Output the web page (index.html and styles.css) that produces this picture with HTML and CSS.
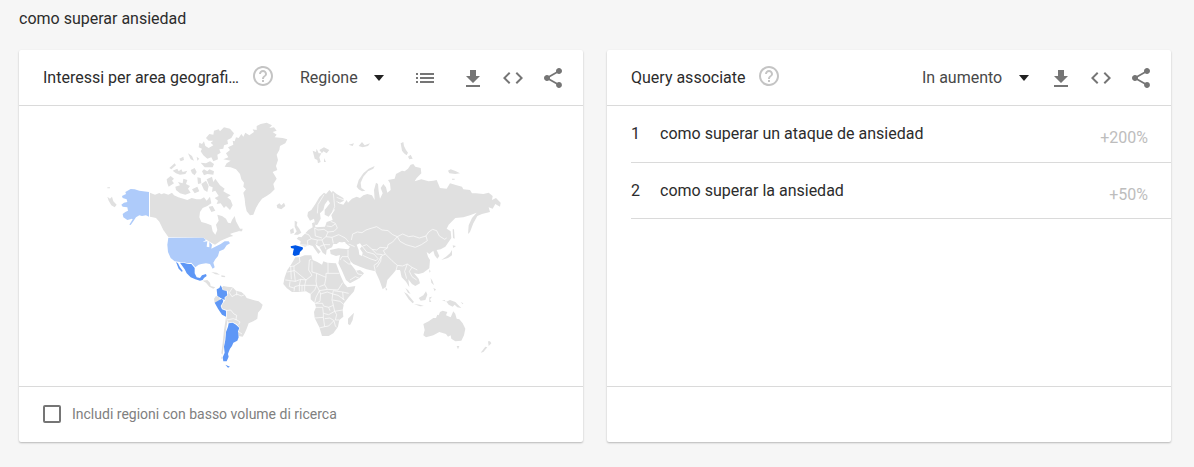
FILE: index.html
```html
<!DOCTYPE html>
<html lang="it">
<head>
<meta charset="utf-8">
<meta name="viewport" content="width=device-width, initial-scale=1">
<title>como superar ansiedad</title>
<link rel="stylesheet" href="styles.css">
</head>
<body>
<svg class="sprite" aria-hidden="true">
  <symbol id="help" viewBox="0 0 24 24"><path d="M11 18h2v-2h-2v2zm1-16C6.480 2 2 6.480 2 12s4.480 10 10 10 10-4.480 10-10S17.520 2 12 2zm0 18c-4.410 0-8-3.590-8-8s3.590-8 8-8 8 3.590 8 8-3.590 8-8 8zm0-14c-2.210 0-4 1.790-4 4h2c0-1.100.9-2 2-2s2 .9 2 2c0 2-3 1.750-3 5h2c0-2.250 3-2.500 3-5 0-2.210-1.790-4-4-4z"/></symbol>
  <symbol id="list" viewBox="0 0 24 24"><path d="M3 7h2v2H3zM3 11h2v2H3zM3 15h2v2H3zM7 7h14v2H7zM7 11h14v2H7zM7 15h14v2H7z"/></symbol>
  <symbol id="download" viewBox="0 0 24 24"><path d="M19 10h-4V4H9v6H5l7 7 7-7zM5 19v2h14v-2H5z"/></symbol>
  <symbol id="code" viewBox="0 0 24 24"><path d="M9.400 16.600L4.800 12l4.600-4.600L8 6l-6 6 6 6 1.400-1.400zm5.200 0l4.600-4.600-4.600-4.600L16 6l6 6-6 6-1.400-1.400z"/></symbol>
  <symbol id="share" viewBox="0 0 24 24"><path d="M18 16.080c-.76 0-1.440.3-1.960.77L8.910 12.700c.05-.23.09-.46.09-.7s-.04-.47-.09-.7l7.050-4.110c.54.5 1.250.81 2.040.81 1.660 0 3-1.340 3-3s-1.340-3-3-3-3 1.340-3 3c0 .24.04.47.09.7L8.040 9.810C7.500 9.310 6.790 9 6 9c-1.660 0-3 1.340-3 3s1.340 3 3 3c.79 0 1.500-.31 2.040-.81l7.120 4.160c-.05.21-.08.43-.08.65 0 1.610 1.310 2.920 2.920 2.920s2.920-1.310 2.920-2.920-1.310-2.920-2.920-2.920z"/></symbol>
  <symbol id="caret" viewBox="0 0 10 6"><path d="M0 0h10L5 6z"/></symbol>
</svg>

<main class="page">
  <h1 class="term">como superar ansiedad</h1>
  <div class="cards">
    <section class="card">
      <header class="card-head">
        <h2 class="title" title="Interessi per area geografica">Interessi per area geografi…</h2>
        <button class="icon help" type="button" aria-label="Guida"><svg><use href="#help"/></svg></button>
        <label class="picker picker-near">
          <select aria-label="Risoluzione"><option>Regione</option></select>
          <svg class="caret"><use href="#caret"/></svg>
        </label>
        <div class="tools">
          <button class="icon icon-list" type="button" aria-label="Elenco"><svg><use href="#list"/></svg></button>
          <button class="icon" type="button" aria-label="Scarica"><svg><use href="#download"/></svg></button>
          <button class="icon" type="button" aria-label="Incorpora"><svg><use href="#code"/></svg></button>
          <button class="icon" type="button" aria-label="Condividi"><svg><use href="#share"/></svg></button>
        </div>
      </header>
      <div class="map-area">
        <svg class="map" viewBox="100 118 402 256" role="img" aria-label="Mappa del mondo">
          <!-- North America and Greenland -->
          <g class="land" transform="translate(100 110) scale(.33333)">
            <path class="low" d="M66 258L78 252 76 246 92 237 104 238 118 242 147 246V320L138 316 126 318 118 316 108 322 100 334 92 345 88 344 98 328 96 326 82 330 70 322 68 312 76 306 84 302 82 292 68 290 64 284 72 278 82 276 80 268 68 264Z"/>
            <path d="M150 248L165 254 178 249 184 253 192 250 205 254 216 248 222 256 235 262 250 266 262 270 275 264 290 268 302 268 312 262 320 272 330 260 334 280 322 288 308 294 300 306 298 322 304 336 318 340 334 346 338 364 346 374 352 360 348 344 356 332 352 314 366 318 378 326 384 338 392 340 396 330 404 318 408 334 420 356 416 364 400 368 390 372 400 378 390 380 362 392 345 404 330 396 310 383 205 381 190 360 178 335 168 324 158 322 150 320Z"/>
            <path d="M370 148L385 142 378 130 390 120 384 112 400 104 398 92 404 94 408 82 416 84 424 72 430 80 436 68 448 76 462 66 458 58 470 60 470 48 482 42 500 38 516 46 508 54 522 52 530 62 518 66 530 74 524 82 548 84 562 88 556 100 540 108 538 120 530 134 534 150 528 168 532 180 518 186 524 196 530 206 520 222 524 238 512 250 500 258 486 266 476 280 468 294 460 314 450 316 440 304 436 286 434 266 430 248 438 238 430 230 432 218 424 208 420 192 408 178 392 172 374 170 380 160 392 152Z"/>
            <path d="M318 84L328 72 340 74 342 62 356 58 360 64 372 52 390 56 402 70 394 84 382 90 384 102 372 106 370 116 358 118 362 128 352 134 354 148 340 154 334 142 322 146 310 136 302 124 306 116 296 112 298 98 306 102 312 94 316 108 326 114 340 106 332 98 340 92 326 92Z"/>
            <path d="M320 208L336 200 340 216 346 206 360 226 374 236 370 244 380 250 392 256 382 262 392 270 398 286 390 300 378 288 372 294 362 280 350 282 354 272 344 264 356 258 346 242 336 246 338 232 328 228Z"/>
            <path d="M226 230L240 226 234 216 248 220 250 206 262 210 258 222 270 228 264 236 272 248 256 254 240 250 228 240ZM200 208L212 198 222 206 216 212 222 220 206 230 202 220ZM218 182L232 176 236 184 244 178 248 186 262 182 256 192 240 194 228 190ZM306 184L312 178 322 184 328 178 342 184 340 194 322 192 312 196ZM272 180L284 174 290 186 284 196 276 190ZM238 146L250 140 252 150 242 154ZM264 130L276 138 282 152 272 148ZM292 202L302 204 304 220 294 222ZM276 238L292 230 298 244 284 250ZM304 222L318 212 326 228 322 246 312 240ZM208 174L224 160 228 166 214 178ZM302 158L318 160 330 154 342 162 338 172 314 172ZM326 290L338 288 346 302 334 306ZM290 140L298 146 292 152Z"/>
            <path d="M22 260L30 266 36 260 40 274 50 284 44 292 34 286 26 272ZM530 286L538 280 544 286 552 278 556 288 544 298 532 294ZM416 356L428 356 426 364 418 364ZM22 232h8v3h-8Z"/>
          </g>
          <!-- United States, Mexico and South America -->
          <g class="land" transform="translate(100 220) scale(.33333)">
            <path class="low" d="M205 53H310L318 60 308 66 322 64 320 80 328 82 328 66 336 74 334 86 350 78 362 72 374 64 386 64 390 70 380 76 372 88 358 94 354 108 346 118 340 128 344 142 338 146 330 132 318 130 304 132 296 134 286 142 274 128 264 130 248 126 240 126 224 124 212 114 204 96 202 74Z"/>
            <path class="mid" d="M240 128H250L264 132 274 132 284 144 284 160 290 172 300 174 306 166 318 162 320 168 312 174 308 180 300 182 286 178 272 172 260 160 254 148ZM228 126L234 130 240 142 248 152 246 156 236 146Z"/>
            <path d="M308 182L322 180 330 188 332 198 346 202 340 206 328 200 318 188ZM334 156L350 158 360 164 346 163ZM364 166L376 168 374 172 364 170Z"/>
            <path class="mid" d="M350 208L358 204 362 196 366 204 368 210 380 212 382 226 374 232 374 240 362 234 352 228Z"/>
            <path d="M342 236L348 228 358 232 360 240 350 250 344 248Z"/>
            <path class="mid" d="M344 248L358 240 366 236 370 242 368 248 362 258 366 268 378 272V290L366 284 354 266Z"/>
            <path d="M366 202L370 198 382 200 398 202 408 212 424 216 434 224 440 234 460 240 476 244 488 254 484 266 474 278 472 296 460 304 446 310 440 326 434 340 428 350 416 348 414 338 420 324 410 312 398 306 386 308 380 300 380 270 368 266 364 258 370 248 376 240 376 232 384 226 384 212 370 210Z"/>
            <path class="mid" d="M386 310L398 308 408 314 418 324 414 334 416 352 412 362 400 368 396 378 390 386 386 396 384 402 386 410 380 424 370 424 368 412 374 398 372 380 376 360 378 336 384 320ZM376 434L390 440 384 443Z"/>
            <path d="M378 292L382 306 378 330 374 360 370 388 368 404 364 400 368 370 372 330ZM364 408L368 418 364 416Z"/>
            <path class="border" d="M398 202L388 218 396 230 410 222 424 228 434 224M410 214V226M378 272L392 270 402 282 410 286 408 298 420 306 416 314M380 300L400 296 410 300M414 334L426 342"/>
          </g>
          <!-- Europe and Asia -->
          <g class="land" transform="translate(280 110) scale(.33333)">
            <path d="M162 268L176 280 190 284 200 270 204 278 216 266 230 260 240 264 250 256 262 252 276 256 284 270 282 240 288 218 294 222 296 244 300 266 308 250 302 234 310 222 318 232 322 248 332 240 330 220 324 210 344 206 348 192 366 182 374 184 384 176 392 164 400 162 406 170 422 174 424 190 410 204 404 214 424 208 446 214 460 212 470 210 480 234 500 236 510 220 530 226 546 230 550 238 570 240 576 250 588 250 610 252 626 248 638 258 636 270 648 264 662 278 660 290 646 282 638 296 626 292 630 306 606 312 592 318 580 340 570 366 564 372 566 346 576 324 590 308 570 316 550 322 526 324 506 344 500 356 512 364 514 384 496 410 482 418 470 420 478 438 472 446 464 436 460 422 448 432 440 426 444 440 450 450 448 475 430 488 416 492 402 490 416 506 420 520 406 528 396 522 385 508 388 532 378 515 365 502 360 480 348 480 340 490 322 510 318 530 308 538 298 510 286 484 260 478 240 470 220 462 210 452 212 462 228 482 240 480 252 490 238 505 210 520 198 510 185 480 175 460 180 435 168 438 152 432 150 420 175 415 205 418 210 410 195 398 178 396 170 402 160 402 156 412 146 416 140 420 138 435 128 428 118 410 106 402 110 412 122 425 115 432 98 408 88 405 75 410 60 404 62 394 50 386 56 380 64 382 74 372 85 360 98 352 96 340 104 336 106 352 135 350 140 336 158 330 154 316 164 300Z"/>
            <path d="M82 318L84 306 94 300 106 282 118 262 132 248 138 252 148 240 156 248 158 242 170 252 190 264 192 272 180 278 166 272 170 290 158 304 146 320 134 314 134 300 150 280 144 270 134 284 130 300 120 310 122 326 112 344 106 346 102 326 90 332Z"/>
            <path d="M44 332L52 336 50 346 58 356 64 368 54 374 42 374 50 364 44 350ZM30 360L40 354 42 368 32 372ZM98 122L108 126 110 116 116 130 124 130 118 142 122 156 114 160 112 150 104 146ZM118 120L132 112 148 120 140 130 130 124 126 130ZM132 144L138 156 132 156ZM206 104L222 100 218 108ZM236 108L246 96 254 106 270 100 264 108 248 112ZM230 230L236 210 250 190 266 176 284 168 280 176 264 184 250 200 242 218 244 234 256 242 246 244 236 238ZM362 100L370 96 372 108 378 120 384 128 380 136 372 130 366 122ZM384 140L392 134 398 146 388 148ZM504 182L512 178 528 184 540 190 526 192 508 190ZM516 206h8v3h-8Z"/>
            <path class="sea" d="M230 404L240 400 246 408 240 416 248 428 246 438 238 434 236 420ZM188 396h8v3h-8Z"/>
            <path class="border" d="M192 270L170 262M158 304L164 290 160 250M132 254L114 284 112 310M214 390L218 372 232 366 246 368 258 360 270 356 290 350 306 360 324 362 338 374 352 380 368 372 386 380 400 378 418 384 438 378 446 366 458 358 470 362 478 378 494 388 500 384M352 380L360 394 378 404 406 412 424 404 442 392 438 378M352 380L338 396 324 404 322 414 310 422 316 432 336 452 352 466 368 468 382 462 396 472 412 480M322 414L300 412 290 420 276 418 260 404 248 408M246 408L260 426 282 432 294 446M276 418L290 432 308 434M316 432L304 438 294 458 282 466 286 484M294 446L288 452 270 446 248 436M304 438L302 454 290 472M352 466L348 482 362 486M382 462L374 484 380 506M396 472L388 484 396 500 410 510M210 452L204 440 204 420M204 440L186 440 180 450M216 462L206 462 190 450M238 505L226 500 210 510M228 482L234 492 246 494M60 404L84 406 82 392 94 386 86 374 74 370M94 386L112 390 126 390 138 380 144 366 132 358 114 360 104 354M112 390L110 402M104 354L106 378 126 384M138 380L156 382 176 374 196 384 206 396M144 366L162 364 172 354 166 340 152 334M156 382L160 400M126 390L132 404 150 404M118 410L132 404 138 418M140 348L154 350 166 342M206 402L224 410"/>
          </g>
          <!-- Spain, Africa and Madagascar -->
          <g class="land" transform="translate(270 220) scale(.33333)">
            <path class="high" d="M62 79L76 76 98 82 99 87 90 96 88 104 74 108 68 104 70 92 72 86 63 84Z"/>
            <path d="M76 112L88 112 104 106 124 106 128 120 142 126 156 134 160 124 172 128 198 130 204 146 212 168 222 190 232 202 256 198 252 214 236 232 222 250 218 270 220 290 208 300 204 320 190 340 176 348 156 348 148 322 134 294 132 276 138 262 134 248 122 238 122 222 108 214 84 216 66 216 50 204 40 192 44 172 52 150 62 136 70 122ZM252 278L248 300 240 316 234 312 234 296Z"/>
            <path class="border" d="M88 112L90 126 72 138 60 140M72 138V152L52 156M72 150L108 180 126 166 116 150 118 120 124 118M126 124V156L140 160 168 172V160H208M174 128V160M72 152L76 184 46 180M76 184L92 178 108 180 104 196H140L134 210 122 222M140 160L138 184 140 196M168 172L164 194 172 208 204 210 218 188M140 196L148 212 172 208M164 194L148 200M92 178L88 196 104 196M104 196V214M88 196L74 200 72 214M88 196V214M96 196V214M60 184L58 200 72 204M148 212L138 232 134 248M148 212L152 222 150 244 136 250M152 222L172 216 188 222 186 240 190 256 176 262 160 258 158 250 136 250M188 222L204 226 224 240M188 222L190 212 218 216 236 220M188 240L210 244 222 254M136 262H158L160 280 160 292 134 294M160 280L176 284 194 274 190 256M176 262L180 272M194 274L218 270M194 274L200 284 196 300 208 300M160 292L164 320 148 324M164 296L180 294 192 302 176 318 164 320M192 302L196 318 200 322M218 216L220 240M62 138L64 178"/>
          </g>
          <!-- Eastern islands and Oceania -->
          <g class="land" transform="translate(370 220) scale(.33333)">
            <path d="M160 312L176 304 190 294 198 294 202 284 206 286 210 276 218 272 232 276 228 286 242 292 250 274 256 282 260 296 268 298 278 310 286 326 282 346 274 362 256 364 244 356 242 346 234 350 228 342 208 336 190 346 168 352 160 346 164 330ZM260 378L268 378 264 388ZM354 364L360 364 364 370 356 378ZM332 398L346 380 352 382 340 396Z"/>
            <path d="M216 240L224 240 228 246 240 240 256 246 264 254 274 264 262 262 254 254 248 260 236 254 230 246ZM102 216L112 222 124 236 132 246 128 250 116 238ZM132 252L150 254 162 258 150 259ZM146 234L160 226 168 214 172 224 166 240 152 242ZM178 232L186 230 180 238 184 246 178 246ZM182 174L188 184 192 196 184 188ZM190 204L198 208 194 214ZM106 204L114 210 122 222 114 218ZM246 90L246 106 234 114 214 120 228 110 240 100ZM248 76L258 78 250 84ZM248 28L252 28 254 56 249 54ZM46 202L52 208 48 212ZM178 148L182 154 178 158ZM272 246L280 250 278 253Z"/>
          </g>
        </svg>
      </div>
      <footer class="card-foot">
        <label class="check"><input type="checkbox"><span>Includi regioni con basso volume di ricerca</span></label>
      </footer>
    </section>

    <section class="card">
      <header class="card-head">
        <h2 class="title">Query associate</h2>
        <button class="icon help" type="button" aria-label="Guida"><svg><use href="#help"/></svg></button>
        <label class="picker picker-end">
          <select aria-label="Ordinamento"><option>In aumento</option></select>
          <svg class="caret"><use href="#caret"/></svg>
        </label>
        <div class="tools tools-near">
          <button class="icon" type="button" aria-label="Scarica"><svg><use href="#download"/></svg></button>
          <button class="icon" type="button" aria-label="Incorpora"><svg><use href="#code"/></svg></button>
          <button class="icon" type="button" aria-label="Condividi"><svg><use href="#share"/></svg></button>
        </div>
      </header>
      <ol class="queries">
        <li><span class="rank">1</span><span class="query">como superar un ataque de ansiedad</span><span class="rise">+200%</span></li>
        <li><span class="rank">2</span><span class="query">como superar la ansiedad</span><span class="rise">+50%</span></li>
      </ol>
      <footer class="card-foot"></footer>
    </section>
  </div>
</main>
</body>
</html>
```
FILE: styles.css
```css
* { box-sizing: border-box; }

body {
  margin: 0;
  background: #f6f6f6;
  color: #2c2c2c;
  font: 400 16px/24px Roboto, sans-serif;
}

.sprite { display: none; }

.page { padding: 7px 23px 24px 19px; }

.term { margin: 0 0 19px; font-size: 16px; font-weight: 400; }

.cards {
  display: grid;
  grid-template-columns: 1fr 1fr;
  gap: 24px;
}

.card {
  display: flex;
  flex-direction: column;
  min-width: 0;
  background: #fff;
  border-radius: 2px;
  box-shadow: 0 1px 2px rgba(0, 0, 0, .26);
}

.card-head {
  display: flex;
  align-items: center;
  height: 56px;
  padding: 0 18px 0 24px;
  border-bottom: 1px solid #dadada;
}

.title {
  margin: 0;
  font-size: 16px;
  font-weight: 400;
  white-space: nowrap;
}

.icon {
  flex: none;
  width: 24px;
  height: 24px;
  padding: 0;
  border: 0;
  background: none;
  color: #757575;
  cursor: pointer;
}

.icon svg { display: block; width: 24px; height: 24px; fill: currentColor; }

.help { margin: 0 0 4px 12px; color: #c4c4c4; }

.picker { display: flex; align-items: center; gap: 16px; }
.picker-near { margin-left: 25px; }
.picker-end { margin-left: auto; }

.picker select {
  appearance: none;
  padding: 0;
  border: 0;
  background: none;
  color: #484848;
  font: inherit;
}

.caret { width: 10px; height: 6px; fill: #212121; }

.tools { display: flex; gap: 16px; margin-left: auto; }
.tools-near { margin-left: 20px; }
.icon-list { margin-right: 8px; }

.map-area { padding: 12px 81px; height: 280px; }

.map { display: block; width: 100%; height: 100%; }

.land { fill: #e0e0e0; }
.low { fill: #aecbfa; }
.mid { fill: #5e97f6; }
.high { fill: #0057e7; }
.sea { fill: #fff; }
.border { fill: none; stroke: #fff; stroke-width: 2; stroke-linejoin: round; }

.card-foot {
  display: flex;
  align-items: center;
  height: 56px;
  padding: 0 24px 2px;
  margin-top: auto;
  border-top: 1px solid #dadada;
}

.check {
  display: flex;
  align-items: center;
  gap: 11px;
  color: #808080;
  font-size: 14px;
}

.check input {
  appearance: none;
  width: 18px;
  height: 18px;
  margin: 0;
  border: 2px solid #757575;
  border-radius: 2px;
}

.check input:checked { background: #757575; }

.queries { margin: 0; padding: 0 0 0 24px; list-style: none; }

.queries li {
  display: flex;
  align-items: center;
  height: 56px;
  padding-right: 23px;
  border-bottom: 1px solid #dadada;
}

.queries li:first-child { height: 57px; }

.rank { width: 29px; }
.query { flex: 1; }
.rise { margin-top: 8px; color: #bdbdbd; }
```
